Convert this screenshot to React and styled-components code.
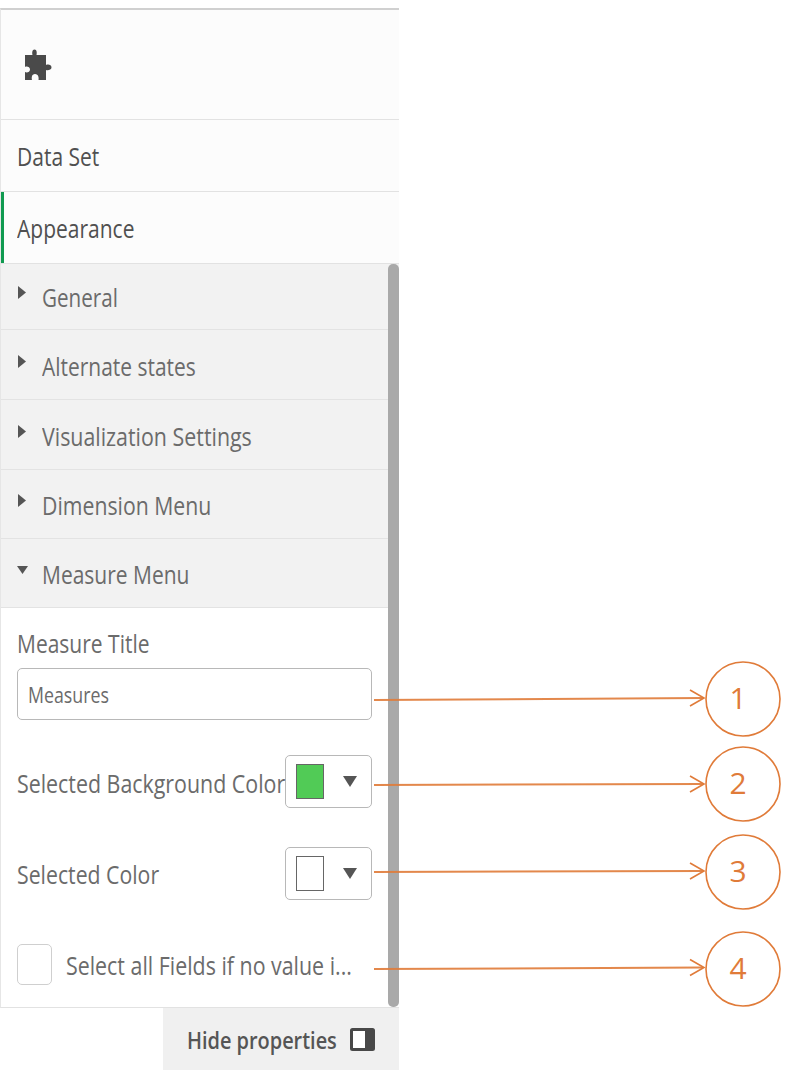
import React from "react";
import styled, { createGlobalStyle } from "styled-components";

const Global = createGlobalStyle`
  html, body { margin: 0; padding: 0; background: #fff; }
  body { font-family: "Open Sans", "Liberation Sans", sans-serif; color: #595959; }
  * { box-sizing: border-box; }
`;

const Page = styled.div`
  position: relative;
  width: 793px;
  height: 1070px;
  padding-top: 8px;
  overflow: hidden;
`;

const Panel = styled.div`
  position: relative;
  width: 399px;
  height: 1000px;
  display: flex;
  flex-direction: column;
  border-top: 2px solid #d0d0d0;
  border-left: 1px solid #e6e6e6;
  border-bottom: 1px solid #e2e2e2;
`;

const Squeezed = styled.span`
  display: inline-block;
  white-space: nowrap;
  transform: scaleX(${(p) => p.$x || 0.85});
  transform-origin: left center;
`;

const IconRow = styled.div`
  height: 110px;
  padding-left: 23px;
  display: flex;
  align-items: center;
  background: #fcfcfc;
  border-bottom: 1px solid #e2e2e2;
`;

const Puzzle = styled.svg`
  width: 28px;
  height: 32px;
  fill: #4a4a4a;
`;

const Tab = styled.div`
  height: 72px;
  display: flex;
  align-items: center;
  padding-left: 16px;
  background: #fcfcfc;
  border-bottom: 1px solid #e2e2e2;
  font-size: 25px;
  color: #505050;
  box-shadow: ${(p) => (p.$active ? "inset 3px 0 0 #109a50" : "none")};
`;

const Section = styled.div`
  height: ${(p) => p.$h}px;
  display: flex;
  align-items: center;
  padding: ${(p) => p.$top}px 0 0 15px;
  background: #f2f2f2;
  border-bottom: 1px solid #e3e3e3;
  font-size: 25px;
  color: #6b6b6b;
`;

const Caret = styled.svg`
  width: 13px;
  height: 13px;
  margin-right: 13px;
  margin-top: -9px;
  flex: none;
  fill: #555;
`;

const Body = styled.div`
  flex: 1;
  padding: 13px 27px 0 16px;
  background: #fff;
  display: flex;
  flex-direction: column;
`;

const FieldTitle = styled.div`
  font-size: 25px;
  line-height: 44px;
  margin-bottom: 3px;
  color: #6b6b6b;
`;

const TextInput = styled.div`
  height: 52px;
  border: 1px solid #b8b8b8;
  border-radius: 5px;
  display: flex;
  align-items: center;
  padding: 0 10px;
  font-size: 21.5px;
  color: #6b6b6b;
`;

const ColorRow = styled.div`
  height: 53px;
  margin-top: ${(p) => p.$mt}px;
  display: flex;
  align-items: center;
`;

const RowLabel = styled.div`
  flex: 1;
  min-width: 0;
  padding-top: ${(p) => p.$top}px;
  font-size: 25px;
  color: #6b6b6b;
`;

const Picker = styled.div`
  width: 87px;
  height: 53px;
  border: 1px solid #b8b8b8;
  border-radius: 5px;
  display: flex;
  align-items: center;
  padding-left: 10px;
  flex: none;
  background: #fff;
`;

const Swatch = styled.div`
  width: 28px;
  height: 35px;
  background: ${(p) => p.$color};
  border: 1px solid #666;
`;

const PickerCaret = styled.svg`
  width: 14px;
  height: 11px;
  margin-left: 19px;
  fill: #555;
`;

const CheckRow = styled.div`
  margin-top: 44px;
  display: flex;
  align-items: center;
  gap: 14px;
`;

const Check = styled.div`
  width: 35px;
  height: 41px;
  border: 1px solid #cfcfcf;
  border-radius: 5px;
  flex: none;
`;

const CheckLabel = styled.div`
  padding-top: 1px;
  font-size: 25px;
  color: #6b6b6b;
`;

const Scrollbar = styled.div`
  position: absolute;
  top: 254px;
  right: 0;
  bottom: 0;
  width: 11px;
  background: #a9a9a9;
  border-radius: 5px;
`;

const Footer = styled.div`
  width: 236px;
  height: 62px;
  margin-left: 163px;
  display: flex;
  align-items: center;
  padding-left: 24px;
  background: #f0f0f0;
  font-size: 24px;
  font-weight: 600;
  color: #555;
`;

const FooterLabel = styled.div`
  width: 163px;
  flex: none;
`;

const PanelIcon = styled.svg`
  width: 25px;
  height: 23px;
  flex: none;
`;

const Overlay = styled.svg`
  position: absolute;
  left: 0;
  top: 0;
  width: 793px;
  height: 1070px;
  pointer-events: none;
`;

const Num = styled.text`
  font-family: "Open Sans", "Liberation Sans", sans-serif;
  font-size: 30px;
  fill: #e07b39;
  text-anchor: middle;
`;

const sections = [
  ["General", 66, 0, 0.825],
  ["Alternate states", 70, 2, 0.838],
  ["Visualization Settings", 70, 2, 0.855],
  ["Dimension Menu", 69, 2, 0.85],
];

const callouts = [
  { n: 1, y1: 700, y2: 698, cy: 699 },
  { n: 2, y1: 785, y2: 784, cy: 784 },
  { n: 3, y1: 872, y2: 871, cy: 872 },
  { n: 4, y1: 969, y2: 967.5, cy: 969 },
];

export default function App() {
  return (
    <Page>
      <Global />
      <Panel>
        <IconRow>
          <Puzzle viewBox="0 0 28 32">
            <path d="M1 6H8.5C8 4 8 .5 10.5 .5C13 .5 13 4 12.5 6H22V16C24 15 27.5 15.5 27.5 18.5C27.5 21 24 21.5 22 21V31H14.5C15 29 14.5 25 11 25C7.5 25 7.5 29 8 31H1V23C3 24 6 23 6 20.5C6 18 3 17 1 18Z" />
          </Puzzle>
        </IconRow>
        <Tab><Squeezed $x={0.84}>Data Set</Squeezed></Tab>
        <Tab $active><Squeezed $x={0.84}>Appearance</Squeezed></Tab>
        {sections.map(([name, h, top, x]) => (
          <Section key={name} $h={h} $top={top}>
            <Caret viewBox="0 0 13 13"><path d="M2 0l8 6.5L2 13z" /></Caret>
            <Squeezed $x={x}>{name}</Squeezed>
          </Section>
        ))}
        <Section $h={69} $top={2}>
          <Caret viewBox="0 0 13 13"><path d="M1 3h11L6.5 11z" /></Caret>
          <Squeezed $x={0.84}>Measure Menu</Squeezed>
        </Section>
        <Body>
          <FieldTitle><Squeezed $x={0.84}>Measure Title</Squeezed></FieldTitle>
          <TextInput><Squeezed $x={0.826}>Measures</Squeezed></TextInput>
          <ColorRow $mt={35}>
            <RowLabel $top={3}><Squeezed $x={0.855}>Selected Background Color</Squeezed></RowLabel>
            <Picker>
              <Swatch $color="#51cb56" />
              <PickerCaret viewBox="0 0 14 11"><path d="M0 0h14L7 11z" /></PickerCaret>
            </Picker>
          </ColorRow>
          <ColorRow $mt={39}>
            <RowLabel $top={1}><Squeezed>Selected Color</Squeezed></RowLabel>
            <Picker>
              <Swatch $color="#fff" />
              <PickerCaret viewBox="0 0 14 11"><path d="M0 0h14L7 11z" /></PickerCaret>
            </Picker>
          </ColorRow>
          <CheckRow>
            <Check />
            <CheckLabel><Squeezed $x={0.855}>Select all Fields if no value i...</Squeezed></CheckLabel>
          </CheckRow>
        </Body>
        <Scrollbar />
      </Panel>
      <Footer>
        <FooterLabel><Squeezed $x={0.83}>Hide properties</Squeezed></FooterLabel>
        <PanelIcon viewBox="0 0 25 23">
          <rect x="1.5" y="1.5" width="22" height="20" rx="1" fill="#fff" stroke="#484848" strokeWidth="3" />
          <rect x="15" y="2" width="8" height="19" fill="#484848" />
        </PanelIcon>
      </Footer>
      <Overlay viewBox="0 0 793 1070">
        {callouts.map((c) => (
          <g key={c.n} fill="none" stroke="#e07b39">
            <line x1="374" y1={c.y1} x2="703" y2={c.y2} strokeWidth="2" strokeOpacity="0.9" />
            <path d={`M690 ${c.y2 - 8}L704 ${c.y2}L690 ${c.y2 + 8}`} strokeWidth="1.6" />
            <circle cx="743" cy={c.cy} r="37" strokeWidth="1.6" />
            <Num x="738" y={c.cy + 10} stroke="none">{c.n}</Num>
          </g>
        ))}
      </Overlay>
    </Page>
  );
}
